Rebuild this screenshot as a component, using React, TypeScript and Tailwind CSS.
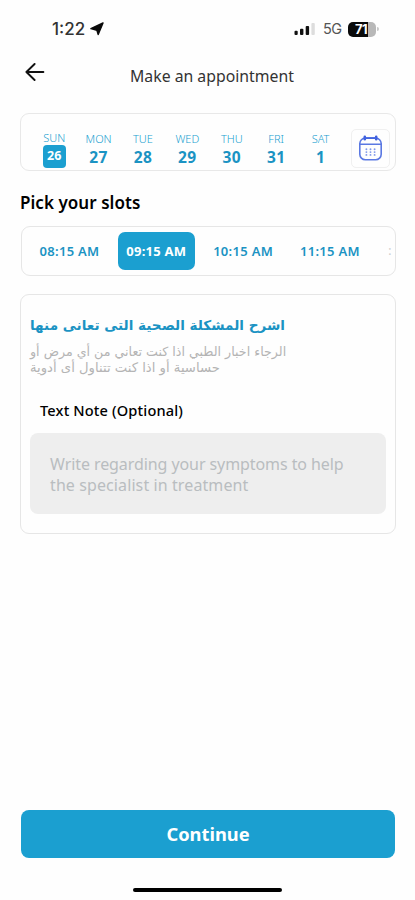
import React, { useState } from 'react';

const days = [
  { label: 'SUN', date: 26 },
  { label: 'MON', date: 27 },
  { label: 'TUE', date: 28 },
  { label: 'WED', date: 29 },
  { label: 'THU', date: 30 },
  { label: 'FRI', date: 31 },
  { label: 'SAT', date: 1 },
];

const slots = ['08:15 AM', '09:15 AM', '10:15 AM', '11:15 AM'];

const StatusBar = () => (
  <div className="flex h-[56px] items-start justify-between pl-[52px] pr-[36px] pt-[18px] font-['Inter',sans-serif]">
    <div className="flex h-[22px] items-center">
      <span className="w-[37px] whitespace-nowrap text-[17px] font-medium leading-[22px] text-[#333]">1:22</span>
      <svg width="14" height="14" viewBox="0 0 14 14" className="ml-px">
        <path d="M13 0.9 L8.2 12.6 L6.9 8.2 L0.9 6.6 Z" fill="#0a0a0a" stroke="#0a0a0a" strokeWidth="1.4" strokeLinejoin="round" />
      </svg>
    </div>
    <div className="flex h-[22px] items-center">
      <svg width="22" height="14" viewBox="0 0 22 14">
        <rect x="0.5" y="8.8" width="3.2" height="4.2" rx="1" fill="#111" />
        <rect x="6" y="6.7" width="3.4" height="6.3" rx="1" fill="#111" />
        <rect x="11.7" y="4" width="3.4" height="9" rx="1" fill="#111" />
        <rect x="17.4" y="1" width="3.4" height="12" rx="1" fill="#ddd" />
      </svg>
      <span className="ml-[7px] w-[20px] text-[14.5px] leading-[22px] tracking-[-0.5px] text-[#555]">5G</span>
      <div className="ml-[5px] flex items-center">
        <div className="flex h-[15px] w-[28px] items-center justify-center rounded-[5px] bg-[linear-gradient(90deg,#0a0a0a_72%,#b8b8b8_72%)] pr-[2px] text-[13px] font-bold leading-[15px] tracking-[-0.5px] text-white">
          71
        </div>
        <div className="ml-px h-[4px] w-[2px] rounded-r bg-[#c8c8c8]" />
      </div>
    </div>
  </div>
);

const CalendarIcon = () => (
  <svg width="25" height="27" viewBox="0 0 25 27" fill="none" stroke="#5a78e2" strokeWidth="1.6" strokeLinecap="round">
    <rect x="1.8" y="3.1" width="21.4" height="21.6" rx="5.5" />
    <path d="M2.2 9.3H22.8" strokeWidth="1.4" />
    <path d="M6.8 1.9V4.3M18.2 1.9V4.3" strokeWidth="2.6" stroke="#3d5fe0" />
    <path d="M7 3.1H18" strokeWidth="1.8" stroke="#4465e0" />
    <g strokeWidth="1.9" stroke="#7f98ea">
      <path d="M8.4 14.3h.01M12.5 14.3h.01M16.6 14.3h.01" />
      <path d="M8.4 17.1h.01M12.5 17.1h.01M16.6 17.1h.01" />
      <path d="M8.4 19.9h.01M12.5 19.9h.01M16.6 19.9h.01" />
    </g>
  </svg>
);

const App = () => {
  const [selectedDate, setSelectedDate] = useState(26);
  const [selectedSlot, setSelectedSlot] = useState('09:15 AM');

  return (
    <div className="flex h-[900px] w-[415px] flex-col overflow-hidden bg-[#fefefe] font-['Noto_Sans',sans-serif] text-black">
      <StatusBar />

      <header className="flex h-[57px] items-start pl-[25px]">
        <button className="mt-[7px]" aria-label="Back">
          <svg width="20" height="18" viewBox="0 0 20 18" fill="none" stroke="#111" strokeWidth="1.9" strokeLinecap="round" strokeLinejoin="round">
            <path d="M18.4 9H1.4M9.6 1L1.4 9l8.2 8" />
          </svg>
        </button>
        <h1 className="ml-[85px] mt-[8px] whitespace-nowrap text-[15.8px] leading-[24px] text-[#333]">Make an appointment</h1>
      </header>

      {/* Week picker */}
      <div className="ml-[20px] flex h-[58px] w-[376px] shrink-0 rounded-[9px] border border-[#e8e8e8]">
        <div className="ml-[11px] flex">
          {days.map(({ label, date }) => (
            <button key={date} onClick={() => setSelectedDate(date)} className="flex w-[44.4px] flex-col items-center">
              {date === selectedDate ? (
                <>
                  <span className="mt-[17px] text-[11px] font-light leading-[14px] text-[#1a9fd0]">{label}</span>
                  <span className="flex h-[23px] w-[23px] items-center justify-center rounded-[4px] bg-[#1b9fd0] text-[12.5px] font-bold leading-none text-white">
                    {date}
                  </span>
                </>
              ) : (
                <>
                  <span className="mt-[18px] text-[11px] font-light leading-[14px] text-[#1a9fd0]">{label}</span>
                  <span className="mt-[2px] text-[15.5px] font-bold leading-[18px] tracking-[0.4px] text-[#1b93c3]">{date}</span>
                </>
              )}
            </button>
          ))}
        </div>
        <div className="ml-[8px] mt-[15px] flex h-[39px] w-[39px] items-center justify-center rounded-[5px] border border-[#f0f0f0]">
          <CalendarIcon />
        </div>
      </div>

      <h2 className="ml-[20px] mt-[18px] h-[37px] text-[17px] font-semibold leading-[27px] tracking-[0.05px]">Pick your slots</h2>

      {/* Time slots */}
      <div className="ml-[21px] flex h-[50px] w-[375px] shrink-0 items-center rounded-[9px] border border-[#e6e6e6] pl-[9px]">
        <div className="flex items-center gap-[9.8px]">
          {slots.map((slot) => (
            <button
              key={slot}
              onClick={() => setSelectedSlot(slot)}
              className={`h-[38px] w-[77px] shrink-0 whitespace-nowrap rounded-[7px] pt-px text-[13px] ${
                slot === selectedSlot ? 'bg-[#1b9fd0] font-bold tracking-[0.25px] text-white' : 'font-semibold tracking-[0.3px] text-[#1b93c3]'
              }`}
            >
              {slot}
            </button>
          ))}
          <span className="ml-[10px] text-[12px] text-[#ccc]">:</span>
        </div>
      </div>

      {/* Symptoms note */}
      <div className="ml-[20px] mt-[18px] h-[240px] w-[376px] shrink-0 rounded-[9px] border border-[#e6e6e6] px-[9px]">
        <div dir="rtl" lang="ar" className="text-left font-['DejaVu_Sans',sans-serif]">
          <h3 className="mt-[19px] whitespace-nowrap text-[13.6px] font-bold leading-[22px] text-[#1b93c3]">
            اشرح المشكلة الصحية التى تعانى منها
          </h3>
          <p className="mt-[8px] whitespace-nowrap text-[12.65px] leading-[16px] text-[#b4b4b4]">
            الرجاء اخبار الطبي اذا كنت تعاني من أي مرض أو
            <br />
            <span className="text-[13.2px]">حساسية أو اذا كنت تتناول أى أدوية</span>
          </p>
        </div>
        <label className="ml-[10px] mt-[22px] block text-[14.6px] font-medium leading-[24px] tracking-[0.15px]">Text Note (Optional)</label>
        <div className="mt-[11px] h-[81px] w-[356px] rounded-[8px] bg-[#eee] pl-[20px] pt-[21px] text-[16px] leading-[20.5px] tracking-[-0.08px] text-[#b9bdc0]">
          Write regarding your symptoms to help
          <br />
          <span className="tracking-[0.1px]">the specialist in treatment</span>
        </div>
      </div>

      <button className="ml-[21px] mt-[276px] h-[48px] w-[374px] shrink-0 rounded-[8px] bg-[#1b9fd0] text-[18.3px] font-bold text-white">
        Continue
      </button>
      <div className="ml-[133px] mt-[30px] h-[4px] w-[149px] shrink-0 rounded-full bg-black" />
    </div>
  );
};

export default App;
